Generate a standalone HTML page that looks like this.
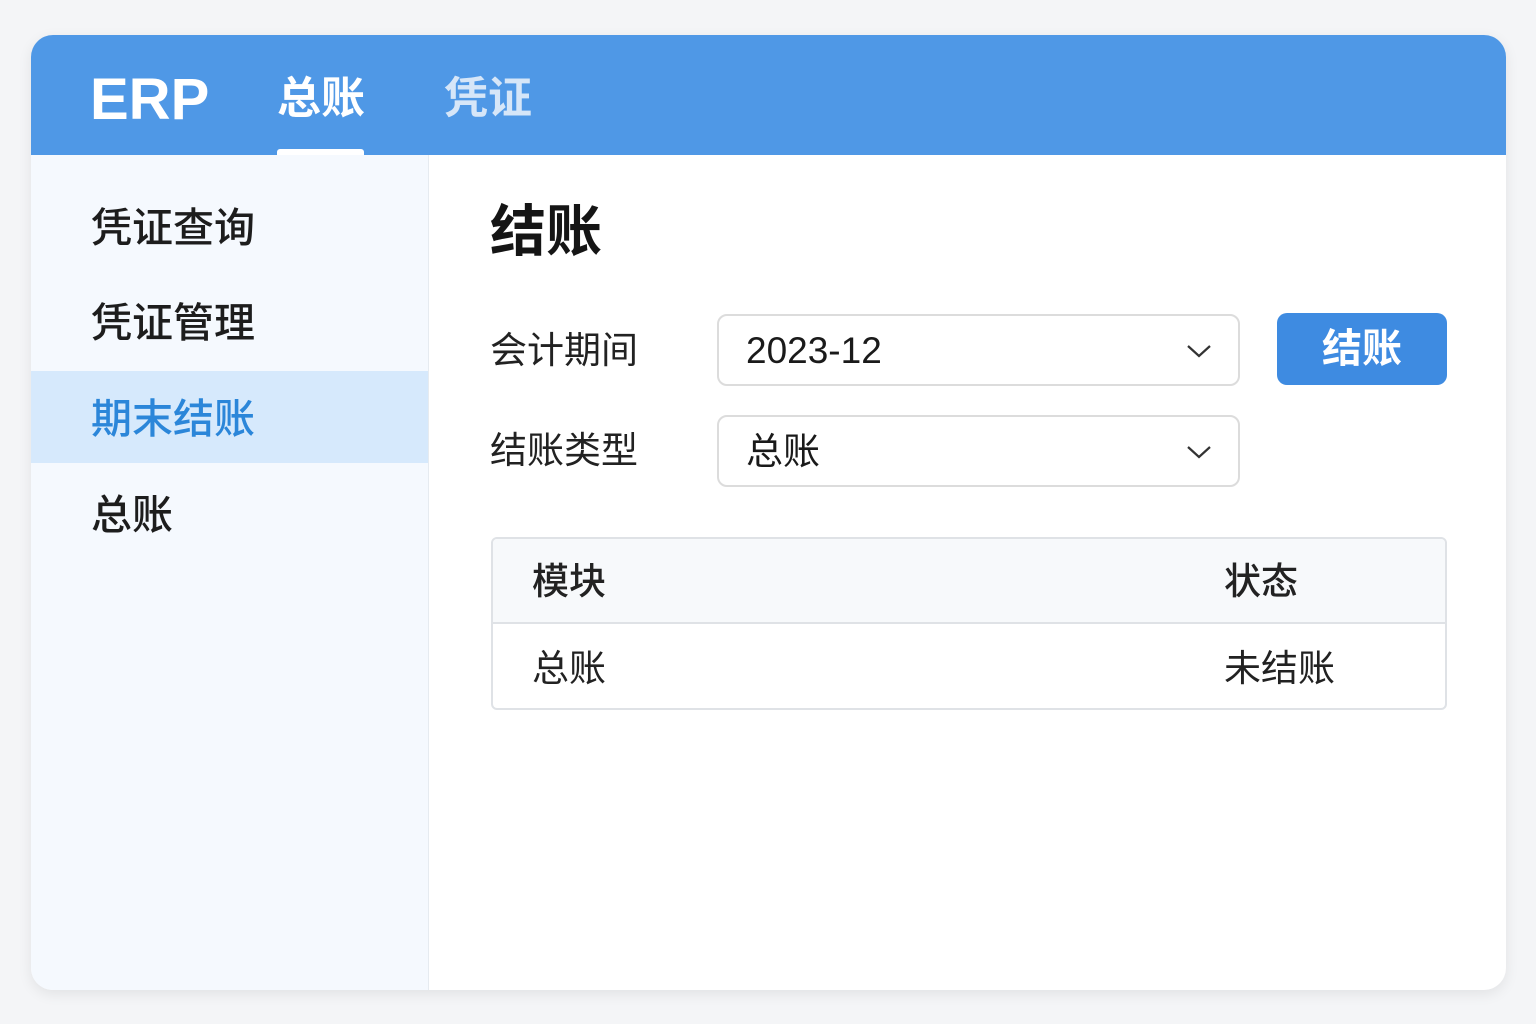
<!DOCTYPE html>
<html><head><meta charset="utf-8"><style>
*{margin:0;padding:0;box-sizing:border-box}
body{width:1536px;height:1024px;background:#f4f5f7;font-family:"Liberation Sans","Noto Sans CJK SC",sans-serif;position:relative;overflow:hidden}
.card{position:absolute;left:31px;top:35px;width:1475px;height:955px;background:#fff;border-radius:22px;overflow:hidden;box-shadow:0 4px 14px rgba(0,0,0,.08)}
.hdr{position:absolute;left:0;top:0;width:100%;height:120px;background:#4f98e6}
.abs{position:absolute;white-space:nowrap;line-height:1}
.side{position:absolute;left:0;top:120px;width:398px;height:835px;background:#f5f9fe;border-right:1px solid #e6ebf0}
.item{position:absolute;left:60px;font-size:41px;font-weight:500;color:#1d1d1d}
.sel{position:absolute;left:686px;width:523px;height:72px;border:2px solid #dcdcdc;border-radius:10px;background:#fff}
.sel span{position:absolute;left:27px;font-size:37px;color:#1a1a1a;line-height:1;white-space:nowrap}
.sel svg{position:absolute;right:26px;top:27px}
.lbl{font-size:37px;color:#222}
</style></head><body>
<div class="card">
 <div class="hdr">
  <div class="abs" style="left:59px;top:36px;font-size:58px;font-weight:bold;color:#fff">ERP</div>
  <div class="abs" style="left:246px;top:42px;font-size:44px;font-weight:bold;color:#fff">总账</div>
  <div class="abs" style="left:246px;top:114px;width:87px;height:6px;background:#fff;border-radius:3px 3px 0 0"></div>
  <div class="abs" style="left:413px;top:42px;font-size:44px;font-weight:bold;color:#d6e6f8">凭证</div>
 </div>
 <div class="side">
  <div class="item abs" style="top:53px">凭证查询</div>
  <div class="item abs" style="top:148px">凭证管理</div>
  <div class="abs" style="left:0;top:216px;width:397px;height:92px;background:#d6e9fc"></div>
  <div class="item abs" style="top:244px;color:#2b86d9">期末结账</div>
  <div class="item abs" style="top:340px">总账</div>
 </div>
 <div class="abs" style="left:459px;top:169px;font-size:56px;font-weight:bold;color:#151515">结账</div>
 <div class="abs lbl" style="left:459px;top:297px">会计期间</div>
 <div class="abs lbl" style="left:459px;top:397px">结账类型</div>
 <div class="sel" style="top:279px"><span style="top:16px">2023-12</span><svg width="26" height="16" viewBox="0 0 26 16"><path d="M2 3 L13 13 L24 3" fill="none" stroke="#333" stroke-width="2.2"/></svg></div>
 <div class="sel" style="top:380px"><span style="top:16px">总账</span><svg width="26" height="16" viewBox="0 0 26 16"><path d="M2 3 L13 13 L24 3" fill="none" stroke="#333" stroke-width="2.2"/></svg></div>
 <div class="abs" style="left:1246px;top:278px;width:170px;height:72px;background:#3e8be1;border-radius:10px;color:#fff;font-size:40px;font-weight:bold;text-align:center;line-height:72px">结账</div>
 <div class="abs" style="left:460px;top:502px;width:956px;height:173px;border:2px solid #dfe2e6;border-radius:6px;overflow:hidden">
  <div style="position:absolute;left:0;top:0;width:100%;height:85px;background:#f7f9fb;border-bottom:2px solid #dfe2e6"></div>
  <div class="abs lbl" style="left:39px;top:24px;font-weight:500">模块</div>
  <div class="abs lbl" style="left:731px;top:24px;font-weight:500">状态</div>
  <div class="abs lbl" style="left:39px;top:111px">总账</div>
  <div class="abs lbl" style="left:731px;top:111px">未结账</div>
 </div>
</div>
</body></html>
